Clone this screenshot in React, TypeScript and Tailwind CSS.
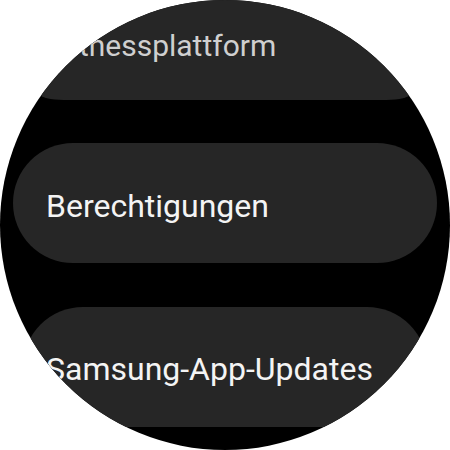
import React from 'react';

export default function App() {
  return (
    <div className="w-[450px] h-[450px] bg-white" style={{ fontFamily: 'Roboto, "Noto Sans", sans-serif' }}>
      <div className="w-[450px] h-[450px] rounded-full overflow-hidden bg-black flex flex-col">
        {/* item scrolled half out at the top, shrunk */}
        <div className="mx-[40px] h-[100px] shrink-0 bg-[#262626] rounded-bl-[24px_6px] rounded-br-[24px_6px] flex items-start pt-[28px] pl-[15px]">
          <span className="text-[30px] leading-[36px] text-[#cfcfcf] whitespace-nowrap">Fitnessplattform</span>
        </div>

        <div className="mt-[43px] mx-[13px] h-[120px] shrink-0 bg-[#262626] rounded-[60px] flex items-center pl-[33px] pt-[6px]">
          <span className="text-[32px] leading-[40px] text-[#f4f4f4] whitespace-nowrap">Berechtigungen</span>
        </div>

        <div className="mt-[44px] mx-[23px] h-[120px] shrink-0 bg-[#262626] rounded-[60px] flex items-center pl-[23px] pt-[4px]">
          <span className="text-[32px] leading-[40px] text-[#f4f4f4] whitespace-nowrap">Samsung-App-Updates</span>
        </div>
      </div>
    </div>
  );
}
